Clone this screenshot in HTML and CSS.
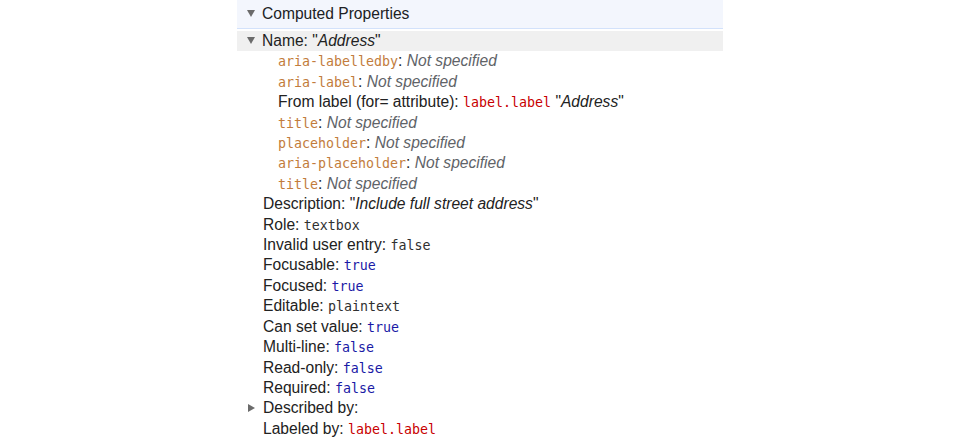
FILE: index.html
```html
<!DOCTYPE html>
<html>
<head>
<meta charset="utf-8">
<link rel="stylesheet" href="styles.css">
</head>
<body>
<div class="panel">
  <div class="header"><span class="tri down"></span>Computed Properties</div>
  <ul class="tree">
    <li class="row lvl1 selected"><span class="tri down"></span>Name: "<i>Address</i>"</li>
    <li class="row lvl2"><span class="attr">aria-labelledby</span>: <i class="ns">Not specified</i></li>
    <li class="row lvl2"><span class="attr">aria-label</span>: <i class="ns">Not specified</i></li>
    <li class="row lvl2">From label (for= attribute): <span class="node">label.label</span> "<i>Address</i>"</li>
    <li class="row lvl2"><span class="attr">title</span>: <i class="ns">Not specified</i></li>
    <li class="row lvl2"><span class="attr">placeholder</span>: <i class="ns">Not specified</i></li>
    <li class="row lvl2"><span class="attr">aria-placeholder</span>: <i class="ns">Not specified</i></li>
    <li class="row lvl2"><span class="attr">title</span>: <i class="ns">Not specified</i></li>
    <li class="row lvl1n">Description: "<i>Include full street address</i>"</li>
    <li class="row lvl1n">Role: <span class="mono">textbox</span></li>
    <li class="row lvl1n">Invalid user entry: <span class="mono">false</span></li>
    <li class="row lvl1n">Focusable: <span class="bool">true</span></li>
    <li class="row lvl1n">Focused: <span class="bool">true</span></li>
    <li class="row lvl1n">Editable: <span class="mono">plaintext</span></li>
    <li class="row lvl1n">Can set value: <span class="bool">true</span></li>
    <li class="row lvl1n">Multi-line: <span class="bool">false</span></li>
    <li class="row lvl1n">Read-only: <span class="bool">false</span></li>
    <li class="row lvl1n">Required: <span class="bool">false</span></li>
    <li class="row lvl1"><span class="tri right"></span>Described by:</li>
    <li class="row lvl1n">Labeled by: <span class="node">label.label</span></li>
  </ul>
</div>
</body>
</html>
```
FILE: styles.css
```css
html, body {
  margin: 0;
  padding: 0;
  background: #ffffff;
}
body {
  font-family: "Liberation Sans", Arial, sans-serif;
  font-size: 15.6px;
  color: #222222;
}
.panel {
  width: 486px;
  margin: 0 auto;
}
.header {
  height: 28px;
  line-height: 28px;
  background: #f3f6fd;
  border-bottom: 1px solid #d3e2fb;
  margin-bottom: 2px;
  padding-left: 10px;
  color: #202124;
  white-space: pre;
}
.tree {
  list-style: none;
  margin: 0;
  padding: 0;
}
.row {
  height: 20.42px;
  line-height: 20.42px;
  white-space: pre;
}
.lvl1 {
  padding-left: 10px;
}
.lvl1n {
  padding-left: 26px;
}
.lvl2 {
  padding-left: 41px;
}
.selected {
  background: #f0f0f0;
}
.tri {
  display: inline-block;
  width: 0;
  height: 0;
  vertical-align: middle;
}
.tri.down {
  border-left: 4.5px solid transparent;
  border-right: 4.5px solid transparent;
  border-top: 7px solid #6b6b6b;
  margin-right: 7px;
  position: relative;
  top: -1px;
}
.tri.right {
  border-top: 4.5px solid transparent;
  border-bottom: 4.5px solid transparent;
  border-left: 7px solid #6b6b6b;
  margin-left: 1px;
  margin-right: 8px;
  position: relative;
  top: -1px;
}
i {
  font-style: italic;
}
.ns {
  color: #5f6368;
}
.attr, .mono, .bool, .node {
  font-family: "DejaVu Sans Mono", "Liberation Mono", monospace;
  font-size: 13.3px;
}
.attr {
  color: #c27c3c;
}
.mono {
  color: #303030;
}
.bool {
  color: #1a1aa6;
}
.node {
  color: #c80000;
}
```
